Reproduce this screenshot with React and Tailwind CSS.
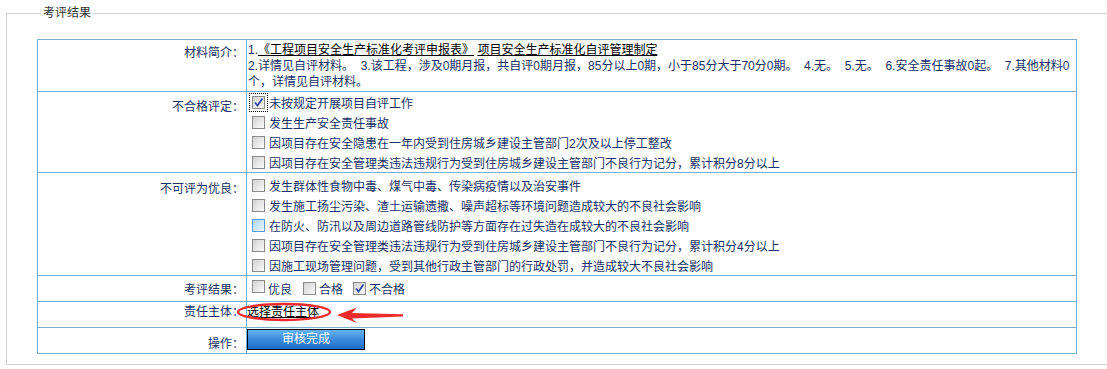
import React from 'react';

const NAVY = 'text-[#1b3266]';

// old-style checkbox drawn with spans
const Box = ({ checked, hover }) => (
  <span
    className={`inline-flex items-center justify-center shrink-0 w-[13px] h-[13px] border ${
      hover
        ? 'border-[#5a9bd3] bg-linear-to-br from-[#aed6f4] to-[#eaf6fd]'
        : 'border-[#8a8a8a] bg-linear-to-br from-[#d2d2d2] to-[#fbfbfb]'
    }`}
  >
    {checked && (
      <svg width="11" height="11" viewBox="0 0 11 11">
        <path d="M2 5.5 L4.5 8.5 L9.5 1.5" fill="none" stroke="#2c47a0" strokeWidth="1.8" />
      </svg>
    )}
  </span>
);

const CheckLine = ({ text, checked, hover, focus }) => (
  <div className="flex items-center h-[20px]">
    <span
      className={`inline-flex items-center justify-center w-[19px] h-[19px] ml-[1px] ${
        focus ? 'border border-dotted border-black' : 'border border-transparent'
      }`}
    >
      <Box checked={checked} hover={hover} />
    </span>
    <span className="ml-[1px] pt-[3px] whitespace-nowrap">{text}</span>
  </div>
);

const BUHEGE = [
  { text: '未按规定开展项目自评工作', checked: true, focus: true },
  { text: '发生生产安全责任事故' },
  { text: '因项目存在安全隐患在一年内受到住房城乡建设主管部门2次及以上停工整改' },
  { text: '因项目存在安全管理类违法违规行为受到住房城乡建设主管部门不良行为记分，累计积分8分以上' },
];

const BUKE = [
  { text: '发生群体性食物中毒、煤气中毒、传染病疫情以及治安事件' },
  { text: '发生施工扬尘污染、渣土运输遗撒、噪声超标等环境问题造成较大的不良社会影响' },
  { text: '在防火、防汛以及周边道路管线防护等方面存在过失造在成较大的不良社会影响', hover: true },
  { text: '因项目存在安全管理类违法违规行为受到住房城乡建设主管部门不良行为记分，累计积分4分以上' },
  { text: '因施工现场管理问题，受到其他行政主管部门的行政处罚，并造成较大不良社会影响' },
];

const td = 'border border-[#78afcf]';
const label = `${td} w-[209px] text-right pr-[2px] align-top`;

export default function App() {
  return (
    <div
      className={`w-[1107px] h-[369px] overflow-hidden bg-white text-[12px] ${NAVY}`}
      style={{ fontFamily: '"Liberation Sans", "Noto Sans CJK SC", sans-serif' }}
    >
      <div className="pl-[6px] pt-[6px]">
        <fieldset className="w-[1120px] border border-[#cfcfcf] pl-[30px] pb-[10px]">
          <legend className="ml-[4px] px-[2px] leading-[14px] text-[#333]">考评结果</legend>
          <table className="mt-[19px] w-[1040px] border-collapse">
            <tbody>
              <tr>
                <td className={`${label} pt-[4px]`}>材料简介：</td>
                <td className={`${td} pl-[1px] pt-[2px] pb-[1px] leading-[16px]`}>
                  <div>
                    1.
                    <a className="text-black underline">《工程项目安全生产标准化考评申报表》</a>{' '}
                    <a className="text-black underline">项目安全生产标准化自评管理制定</a>
                  </div>
                  <div>
                    2.详情见自评材料。&nbsp; 3.该工程，涉及0期月报，共自评0期月报，85分以上0期，小于85分大于70分0期。&nbsp;
                    4.无。&nbsp; 5.无。&nbsp; 6.安全责任事故0起。&nbsp; 7.其他材料0个，详情见自评材料。
                  </div>
                </td>
              </tr>
              <tr>
                <td className={`${label} pt-[6px]`}>不合格评定：</td>
                <td className={`${td} pl-[1px]`}>
                  {BUHEGE.map((c) => (
                    <CheckLine key={c.text} {...c} />
                  ))}
                </td>
              </tr>
              <tr>
                <td className={`${label} pt-[7px]`}>不可评为优良：</td>
                <td className={`${td} pl-[1px] pt-[2px]`}>
                  {BUKE.map((c) => (
                    <CheckLine key={c.text} {...c} />
                  ))}
                </td>
              </tr>
              <tr>
                <td className={`${label} h-[26px] pt-[5px]`}>考评结果：</td>
                <td className={`${td} pl-[1px]`}>
                  <div className="flex items-center h-[20px]">
                    <span className="ml-[4px]"><Box /></span>
                    <span className="ml-[3px] mr-[11px] pt-[3px]">优良</span>
                    <Box />
                    <span className="ml-[3px] mr-[10px] pt-[3px]">合格</span>
                    <Box checked />
                    <span className="ml-[3px] pt-[3px]">不合格</span>
                  </div>
                </td>
              </tr>
              <tr>
                <td className={`${label} h-[26px] pt-[2px] leading-[16px]`}>责任主体：</td>
                <td className={`${td} pl-0 pt-[2px] align-top leading-[16px]`}>
                  <div className="relative">
                    <a className="text-black underline">选择责任主体</a>
                    <svg
                      className="absolute left-[-12px] top-[-5px] overflow-visible pointer-events-none"
                      width="175"
                      height="30"
                      viewBox="0 0 175 30"
                    >
                      <ellipse cx="49" cy="13" rx="46" ry="8" fill="none" stroke="#ec2a2a" strokeWidth="2.4" />
                      <polygon
                        points="102,16 122,8.5 117,14 168,15.2 168,17.6 117,19.6 122,24"
                        fill="#ee2b2b"
                      />
                    </svg>
                  </div>
                </td>
              </tr>
              <tr>
                <td className={`${label} h-[26px] pt-[7px]`}>操作：</td>
                <td className={`${td} pl-0 align-top`}>
                  <button className="mt-[1px] block w-[118px] h-[21px] border border-black bg-linear-to-b from-[#68b2f0] via-[#3b8bdc] to-[#1d6cc3] text-white text-[12px] leading-[16px] pb-[2px]">
                    审核完成
                  </button>
                </td>
              </tr>
            </tbody>
          </table>
        </fieldset>
      </div>
    </div>
  );
}
